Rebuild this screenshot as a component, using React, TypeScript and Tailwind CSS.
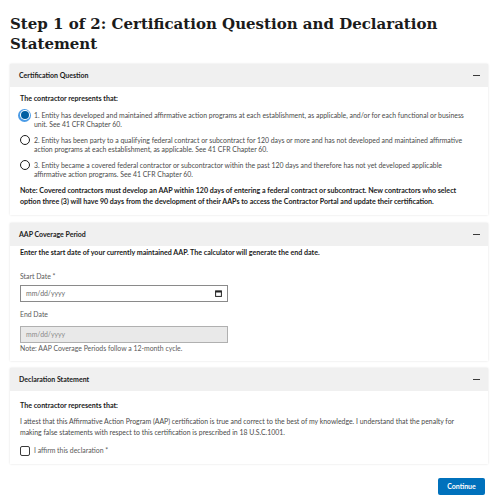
import React from "react";

const sans = { fontFamily: '"Lato", "Liberation Sans", sans-serif' };

function Minus() {
  return <span className="block w-[7px] h-[1.5px] bg-[#3a3a3a] mr-[8px]" />;
}

function Header({ title }: { title: string }) {
  return (
    <div className="h-[23px] bg-[#f0f0f0] flex items-center justify-between pl-[9px]">
      <span className="text-[7px] font-bold text-[#1b1b1b] leading-none">{title}</span>
      <Minus />
    </div>
  );
}

function Radio({ checked }: { checked?: boolean }) {
  if (checked) {
    return (
      <span className="shrink-0 w-[13px] h-[13px] rounded-full bg-[#4a9be6] flex items-center justify-center -ml-[2px] -mt-[2.5px] mr-[3px]">
        <span className="w-[10px] h-[10px] rounded-full bg-white flex items-center justify-center">
          <span className="w-[8px] h-[8px] rounded-full bg-[#005ea2]" />
        </span>
      </span>
    );
  }
  return <span className="shrink-0 w-[10px] h-[10px] rounded-full border-[1.5px] border-[#1b1b1b] bg-white -mt-[1px] mr-[4px]" />;
}

function CalendarIcon() {
  return (
    <svg width="7" height="7" viewBox="0 0 7 7" className="mr-[5px]">
      <rect x="0.6" y="0.9" width="5.8" height="5.5" fill="none" stroke="#222" strokeWidth="1" />
      <rect x="0.6" y="0.9" width="5.8" height="1.6" fill="#222" />
    </svg>
  );
}

export default function App() {
  return (
    <div className="w-[500px] h-[498px] bg-white px-[10px] pt-[14px] text-[#1b1b1b] overflow-hidden" style={sans}>
      <h1
        className="text-[15px] leading-[20px] font-bold text-[#1b1b1b] mb-[10px]"
        style={{ fontFamily: '"DejaVu Serif", "Liberation Serif", serif' }}
      >
        Step 1 of 2: Certification Question and Declaration
        <br />
        Statement
      </h1>

      <div className="w-[478px] flex flex-col">
        {/* Card 1 */}
        <div className="bg-white shadow-[0_0_2px_rgba(0,0,0,0.12)]">
          <Header title="Certification Question" />
          <div className="px-[10px] pt-[7px] pb-[8px] text-[6.9px] whitespace-nowrap">
            <div className="font-bold text-[7.1px] leading-[9px]">The contractor represents that:</div>
            <div className="mt-[8px] flex flex-col gap-[8px] text-[#4a4a4a] leading-[8.5px]">
              <div className="flex items-start">
                <Radio checked />
                <span>
                  1. Entity has developed and maintained affirmative action programs at each establishment, as applicable, and/or for each functional or business
                  <br />
                  unit. See 41 CFR Chapter 60.
                </span>
              </div>
              <div className="flex items-start">
                <Radio />
                <span>
                  2. Entity has been party to a qualifying federal contract or subcontract for 120 days or more and has not developed and maintained affirmative
                  <br />
                  action programs at each establishment, as applicable. See 41 CFR Chapter 60.
                </span>
              </div>
              <div className="flex items-start">
                <Radio />
                <span>
                  3. Entity became a covered federal contractor or subcontractor within the past 120 days and therefore has not yet developed applicable
                  <br />
                  affirmative action programs. See 41 CFR Chapter 60.
                </span>
              </div>
            </div>
            <div className="mt-[7px] font-bold text-[7.1px] leading-[11px]">
              Note: Covered contractors must develop an AAP within 120 days of entering a federal contract or subcontract. New contractors who select
              <br />
              option three (3) will have 90 days from the development of their AAPs to access the Contractor Portal and update their certification.
            </div>
          </div>
        </div>

        {/* Card 2 */}
        <div className="mt-[8px] bg-white shadow-[0_0_2px_rgba(0,0,0,0.12)]">
          <Header title="AAP Coverage Period" />
          <div className="px-[10px] pt-[2px] pb-[8px] text-[6.9px] whitespace-nowrap">
            <div className="font-bold text-[7.1px] leading-[9px]">Enter the start date of your currently maintained AAP. The calculator will generate the end date.</div>
            <div className="mt-[15px] leading-[9px] text-[#5a5a5a]">Start Date *</div>
            <div className="mt-[4px] w-[208px] h-[17px] border border-[#8a8a8a] flex items-center justify-between pl-[5px]">
              <span className="text-[#6a6a6a]">mm/dd/yyyy</span>
              <CalendarIcon />
            </div>
            <div className="mt-[8px] leading-[9px] text-[#5a5a5a]">End Date</div>
            <div className="mt-[7px] w-[208px] h-[17px] border border-[#b0b0b0] bg-[#e9e9e9] flex items-center pl-[5px]">
              <span className="text-[#8a8a8a]">mm/dd/yyyy</span>
            </div>
            <div className="leading-[9px] mt-[1px] text-[#5a5a5a]">Note: AAP Coverage Periods follow a 12-month cycle.</div>
          </div>
        </div>

        {/* Card 3 */}
        <div className="mt-[7px] bg-white shadow-[0_0_2px_rgba(0,0,0,0.12)]">
          <Header title="Declaration Statement" />
          <div className="px-[10px] pt-[10px] pb-[8px] text-[6.9px] whitespace-nowrap">
            <div className="font-bold text-[7.1px] leading-[9px]">The contractor represents that:</div>
            <div className="mt-[6px] leading-[11.4px] text-[#4a4a4a]">
              I attest that this Affirmative Action Program (AAP) certification is true and correct to the best of my knowledge. I understand that the penalty for
              <br />
              making false statements with respect to this certification is prescribed in 18 U.S.C.1001.
            </div>
            <div className="mt-[7px] flex items-center">
              <span className="w-[10px] h-[10px] border-[1.5px] border-[#3a3a3a] rounded-[2px] bg-white mr-[4px]" />
              <span className="text-[#5a5a5a] leading-[9px]">I affirm this declaration *</span>
            </div>
          </div>
        </div>

        <div className="mt-[14px] flex justify-end pr-[3px]">
          <button className="w-[47px] h-[17px] bg-[#0071bc] rounded-[2px] text-white text-[7px] font-bold flex items-center justify-center">
            Continue
          </button>
        </div>
      </div>
    </div>
  );
}
